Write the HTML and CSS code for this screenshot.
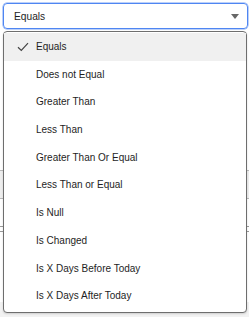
FILE: index.html
```html
<!DOCTYPE html>
<html lang="en">
<head>
<meta charset="UTF-8">
<title>Operator picker</title>
<link rel="stylesheet" href="styles.css">
</head>
<body>
  <div class="page">
    <div class="select">
      <span class="select-value">Equals</span>
      <span class="caret"></span>
    </div>
    <!-- rows of the grid underneath the menu -->
    <div class="behind">
      <div class="grid-row shaded"></div>
      <div class="grid-row"></div>
      <div class="grid-foot"></div>
    </div>
    <ul class="menu">
      <li class="menu-item selected">
        <svg class="check" width="12" height="10" viewBox="0 0 12 10"><path d="M1 5.2 L4.3 8.4 L11 1.2" fill="none" stroke="#444" stroke-width="1.2"/></svg>
        Equals
      </li>
      <li class="menu-item">Does not Equal</li>
      <li class="menu-item">Greater Than</li>
      <li class="menu-item">Less Than</li>
      <li class="menu-item">Greater Than Or Equal</li>
      <li class="menu-item">Less Than or Equal</li>
      <li class="menu-item">Is Null</li>
      <li class="menu-item">Is Changed</li>
      <li class="menu-item">Is X Days Before Today</li>
      <li class="menu-item">Is X Days After Today</li>
    </ul>
  </div>
</body>
</html>
```

FILE: styles.css
```css
body {
  margin: 0;
  font-family: "Liberation Sans", Arial, Helvetica, sans-serif;
  color: #1e1e1e;
  background-color: white;
}
.page {
  position: relative;
  width: 249px;
  height: 317px;
  overflow: hidden;
}
/* the closed select box */
.select {
  position: relative;
  margin: 3px 1px 0 3px;
  height: 24px;
  border: 1px solid #4f86f2;
  border-radius: 4px;
  box-shadow: 0 0 0 0.5px #7aa4f5;
  display: flex;
  align-items: center;
  padding-left: 10px;
  font-size: 10.2px;
}
.select-value {
  flex: 1;
}
.caret {
  width: 0;
  height: 0;
  margin-right: 8px;
  border-left: 4px solid transparent;
  border-right: 4px solid transparent;
  border-top: 5px solid #676767;
}
/* stuff under the menu, only a few px show at the sides */
.behind {
  padding-top: 141px;
}
.grid-row {
  height: 27px;
  border-top: 1px solid #b9b9b9;
}
.grid-row.shaded {
  background-color: #eeeeee;
}
.grid-foot {
  height: 4px;
  border-top: 1px solid #9a9a9a;
  border-bottom: 1px solid #9a9a9a;
}
.page::after {
  content: "";
  position: absolute;
  left: 0;
  right: 0;
  top: 302px;
  bottom: 0;
  background-color: #f2f2f2;
}
/* open dropdown list */
.menu {
  position: absolute;
  z-index: 2;
  top: 31px;
  left: 3px;
  width: 242px;
  height: 279px;
  margin: 0;
  padding: 1px 0 0 0;
  list-style: none;
  background-color: white;
  border: 1px solid #6e6e6e;
  border-radius: 4px;
  box-shadow: 0 1px 2px rgba(0, 0, 0, 0.15);
}
.menu-item {
  position: relative;
  height: 27.7px;
  line-height: 27.7px;
  padding-left: 32px;
  font-size: 10px;
}
.menu-item.selected {
  background-color: #f0f0f0;
}
.check {
  position: absolute;
  left: 13px;
  top: 9px;
}
```
